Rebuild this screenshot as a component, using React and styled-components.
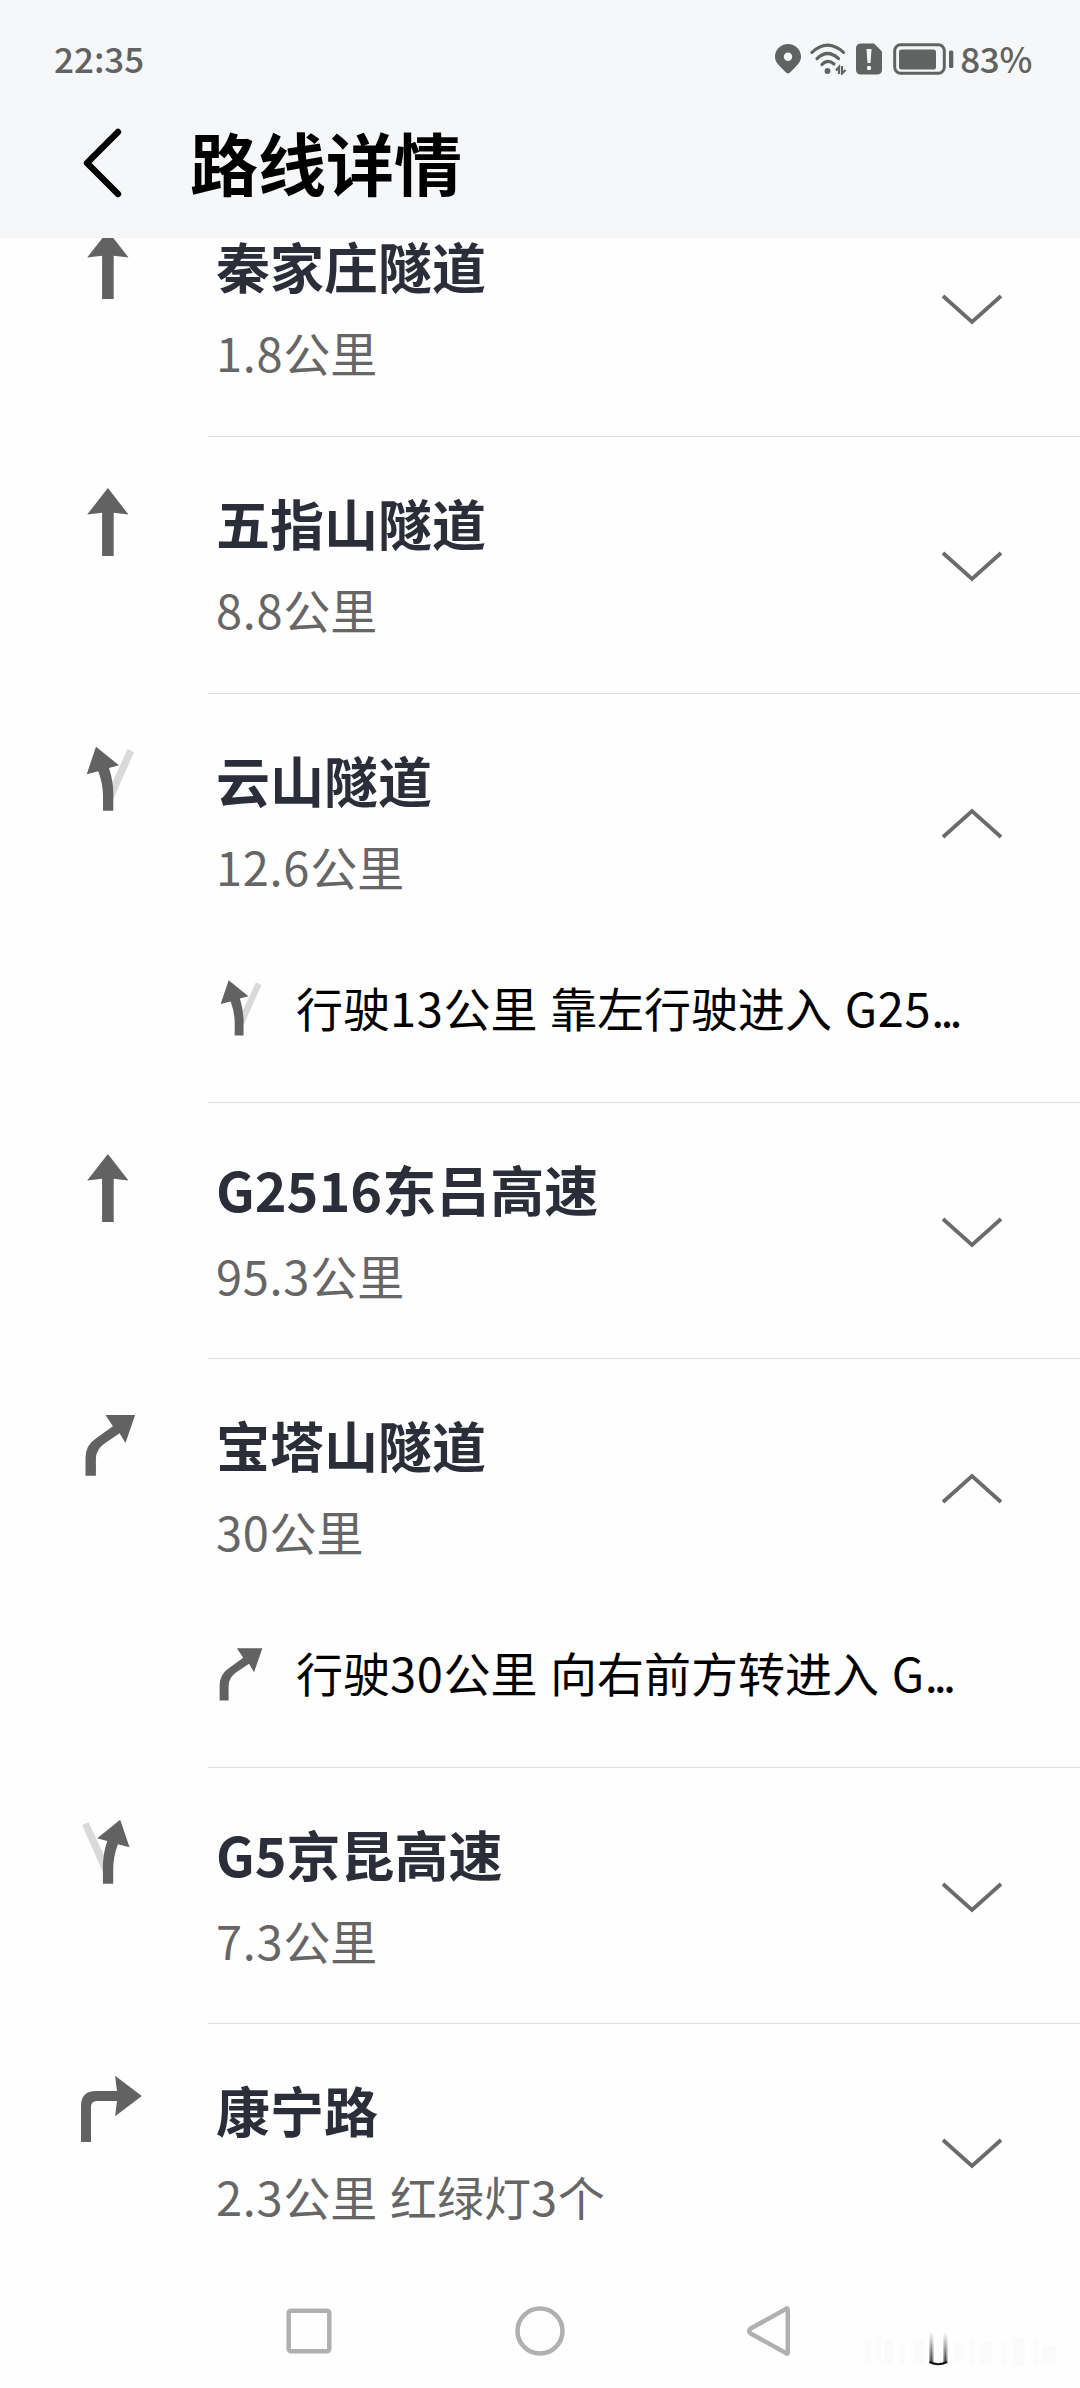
import React from 'react';
import styled, { createGlobalStyle } from 'styled-components';

const GlobalStyle = createGlobalStyle`
  * {
    box-sizing: border-box;
  }

  body {
    margin: 0;
    background: #fefefe;
    font-family: 'Noto Sans CJK SC', sans-serif;
  }

  svg {
    display: block;
    flex-shrink: 0;
  }
`;

const steps = [
  { icon: 'straight', name: '秦家庄隧道', info: '1.8公里', height: 257 },
  { icon: 'straight', name: '五指山隧道', info: '8.8公里', height: 257 },
  {
    icon: 'keepLeft',
    name: '云山隧道',
    info: '12.6公里',
    height: 409,
    detail: '行驶13公里 靠左行驶进入 G25',
  },
  { icon: 'straight', name: 'G2516东吕高速', info: '95.3公里', height: 256 },
  {
    icon: 'slightRight',
    name: '宝塔山隧道',
    info: '30公里',
    height: 409,
    detail: '行驶30公里 向右前方转进入 G',
  },
  { icon: 'keepRight', name: 'G5京昆高速', info: '7.3公里', height: 256 },
  { icon: 'right', name: '康宁路', info: '2.3公里 红绿灯3个', height: 257 },
];

const fork = (
  <>
    <path d="M55.7 5L62 8.3L41.3 55L39 41Z" fill="#d9d9d9" />
    <path d="M24 2.7L47 21.3L37 23.9Q41.3 37 41.3 50V66.7H31V52Q31 40 26.3 27.3L14.7 30.3Z" />
  </>
);

const turns = {
  straight: <path d="M35.9 1L56.5 27.5L41.7 25.8V69H30.1V25.8L15.2 27.5Z" />,
  keepLeft: fork,
  keepRight: <g transform="translate(72.2 -1) scale(-1 1)">{fork}</g>,
  slightRight: (
    <path d="M63.1 6L53.5 34L47.6 24.2L32.5 34.4Q23.9 40.5 23.9 50V66.7H13.5V49Q13.5 36 24.5 29L40.9 17.2L33.5 6Z" />
  ),
  right: (
    <path d="M69.8 22L43.1 42.3L45 27H25Q19 27 19 33V68H9V32Q9 17 24 17H45L43.1 1.7Z" />
  ),
};

function Turn({ type, size }) {
  return (
    <svg width={size} height={size} viewBox="0 0 72 72" fill="#626262">
      {turns[type]}
    </svg>
  );
}

function Chevron({ up }) {
  return (
    <svg width="64" height="34" viewBox="0 0 64 34" fill="none" stroke="#6b6b6b" strokeWidth="3.8">
      <path d={up ? 'M3 32L32 6L61 32' : 'M3 5L32 31L61 5'} />
    </svg>
  );
}

// digits and latin letters are set slightly wider than the font's own advance
function MixedText({ children }) {
  return children
    .split(/([A-Z0-9.]+)/)
    .map((part, i) => (i % 2 ? <Latin key={i}>{part}</Latin> : part));
}

function Step({ icon, name, info, detail, height }) {
  return (
    <Row $height={height}>
      <RowIcon>
        <Turn type={icon} size={72} />
      </RowIcon>
      <RowBody>
        <Summary>
          <div>
            <Name>{name}</Name>
            <Info><MixedText>{info}</MixedText></Info>
          </div>
          <Chevron up={Boolean(detail)} />
        </Summary>
        {detail && (
          <Detail>
            <Turn type={icon} size={62} />
            <DetailText>
              <MixedText>{detail}</MixedText>
              <Dots>...</Dots>
            </DetailText>
          </Detail>
        )}
      </RowBody>
    </Row>
  );
}

function StatusIcons() {
  return (
    <Icons>
      <svg width="26" height="32" viewBox="0 0 26 32" fill="#616362">
        <path
          fillRule="evenodd"
          d="M13 1C20.2 1 26 6.6 26 13.6C26 18 23.7 20.8 20 24.5L15 29.6Q13 31.6 11 29.6L6 24.5C2.3 20.8 0 18 0 13.6C0 6.6 5.8 1 13 1ZM13 9.6A4.2 4.2 0 1 0 13 18A4.2 4.2 0 1 0 13 9.6Z"
        />
      </svg>
      <svg width="37" height="32" viewBox="0 0 37 32" fill="none" stroke="#616362" strokeWidth="3.2" strokeLinecap="round">
        <path d="M2 9.4Q17.5 -5 33.5 9.4" />
        <path d="M7 15.6Q17.5 5.5 28.5 15.6" />
        <path d="M12 21.5Q17.5 15.5 24 21" />
        <circle cx="17.5" cy="28" r="2.9" fill="#616362" stroke="none" />
        <path d="M26 27.5L29 24V31M32 23V30.5L35.5 27" strokeWidth="2.2" strokeLinecap="butt" />
      </svg>
      <svg width="26" height="32" viewBox="0 0 26 32" fill="#616362">
        <path d="M5 .5H18L26 8.5V26.5Q26 31.5 21 31.5H5Q0 31.5 0 26.5V5.5Q0 .5 5 .5Z" />
        <path d="M10.5 6H15.5L14.5 20H11.5Z" fill="#f5f7f9" />
        <circle cx="13" cy="25" r="2.2" fill="#f5f7f9" />
      </svg>
      <Battery width="61" height="32" viewBox="0 0 61 32" fill="#616362">
        <rect x="1.7" y="1.7" width="49.6" height="28.6" rx="6" fill="none" stroke="#616362" strokeWidth="3" />
        <rect x="6" y="6.5" width="37" height="20" rx="2.5" />
        <rect x="56" y="7.5" width="4.3" height="17.5" rx="1.5" />
      </Battery>
    </Icons>
  );
}

function App() {
  return (
    <Screen>
      <GlobalStyle />
      <Header>
        <StatusBar>
          <span>22:35</span>
          <StatusRight>
            <StatusIcons />
            <Percent>83%</Percent>
          </StatusRight>
        </StatusBar>
        <TitleBar>
          <svg width="40" height="70" viewBox="0 0 40 70" fill="none" stroke="#000" strokeWidth="6.4" strokeLinecap="round" strokeLinejoin="round">
            <path d="M36 4L5 35L36 66" />
          </svg>
          <Title>路线详情</Title>
        </TitleBar>
      </Header>
      <List>
        {steps.map((step) => (
          <Step key={step.name} {...step} />
        ))}
      </List>
      <NavBar>
        <svg width="50" height="50" viewBox="0 0 50 50">
          <rect x="4.7" y="4.7" width="40.6" height="40.6" rx="2.5" />
        </svg>
        <svg width="50" height="50" viewBox="0 0 50 50">
          <circle cx="25" cy="25" r="22.5" />
        </svg>
        <svg width="50" height="50" viewBox="0 0 50 50">
          <path d="M41.8 4Q41.8 1 39.5 3.300L4.500 22.500Q2 25 4.500 27.500L39.500 46.700Q41.800 49 41.800 46Z" />
        </svg>
      </NavBar>
      <Watermark width="200" height="40" viewBox="0 0 200 40">
        <defs>
          <linearGradient id="fade" x1="0" y1="0" x2="0" y2="1">
            <stop offset="0" stopColor="#000" stopOpacity="0" />
            <stop offset="1" stopColor="#000" stopOpacity="0.85" />
          </linearGradient>
          <linearGradient id="edges">
            <stop offset="0" stopColor="#fff" stopOpacity="0.7" />
            <stop offset="0.5" stopColor="#fff" stopOpacity="0" />
            <stop offset="1" stopColor="#fff" stopOpacity="0.7" />
          </linearGradient>
        </defs>
        <g fill="#fbfbfb">
          <path d="M4 8h7v28h-7zM16 6h5v26h-5zM24 10h9v24h-9zM40 14h5v20h-5zM54 10h10v24h-10z" />
          <path d="M94 12h10v20h-10zM110 8h5v28h-5zM120 12h12v23h-12zM142 12h5v24h-5zM153 8h12v28h-12zM174 10h5v26h-5zM182 16h14v18h-14z" />
        </g>
        <path d="M69 2h4.5v31h-4.5zM83 2h4.5v31h-4.5z" fill="url(#fade)" />
        <path d="M69 2h4.5v31h-4.5z" fill="url(#edges)" />
        <path d="M83 2h4.5v31h-4.5z" fill="url(#edges)" />
        <path d="M69.5 32Q78.2 36.5 87 32" fill="none" stroke="#111" strokeWidth="2.2" />
      </Watermark>
    </Screen>
  );
}

const Screen = styled.div`
  position: relative;
  display: flex;
  flex-direction: column;
  width: 1080px;
  height: 2388px;
  overflow: hidden;
  background: #fefefe;
`;

const Header = styled.header`
  position: relative;
  z-index: 1;
  flex-shrink: 0;
  height: 238px;
  background: #f5f7f9;
`;

const StatusBar = styled.div`
  display: flex;
  justify-content: space-between;
  height: 118px;
  padding: 0 48px 0 54px;
  color: #616362;
  font-size: 35px;
  font-weight: 500;
  line-height: 115px;
`;

const StatusRight = styled.div`
  display: flex;
  align-items: flex-start;
`;

const Icons = styled.div`
  display: flex;
  gap: 9px;
  padding-top: 43px;
  margin-right: 6px;
`;

const Battery = styled.svg`
  margin-left: 2px;
`;

const Percent = styled.span`
  letter-spacing: -0.3px;
`;

const TitleBar = styled.div`
  display: flex;
  align-items: center;
  height: 90px;
  padding-left: 82px;
`;

const Title = styled.h1`
  margin: -2px 0 0 68px;
  color: #000;
  font-size: 68px;
  font-weight: 700;
  line-height: 84px;
`;

const List = styled.main`
  flex: 1;
  min-height: 0;
  margin-top: -58px;
  overflow: hidden;
`;

const Row = styled.section`
  display: flex;
  height: ${(props) => props.$height}px;
`;

const RowIcon = styled.div`
  width: 208px;
  padding: 50px 0 0 72px;
`;

const RowBody = styled.div`
  flex: 1;
  border-bottom: 1px solid #dedede;

  ${Row}:last-child & {
    border-bottom: none;
  }
`;

const Summary = styled.div`
  display: flex;
  align-items: center;
  justify-content: space-between;
  height: 256px;
  padding: 0 76px 0 8px;
`;

const Name = styled.div`
  margin-top: -4px;
  color: #2b2e38;
  font-size: 54px;
  font-weight: 700;
  line-height: 70px;
`;

const Info = styled.div`
  margin-top: 21px;
  color: #666;
  font-size: 47px;
  line-height: 60px;
  word-spacing: 2px;
`;

const Latin = styled.span`
  letter-spacing: 0.015em;
`;

const Detail = styled.div`
  display: flex;
  padding-top: 28px;
`;

const DetailText = styled.div`
  margin-left: 26px;
  color: #000;
  font-size: 47px;
  line-height: 58px;
  white-space: nowrap;
  word-spacing: 2px;
`;

const Dots = styled.span`
  letter-spacing: -4px;
`;

const NavBar = styled.nav`
  display: flex;
  flex-shrink: 0;
  align-items: center;
  justify-content: center;
  gap: 181px;
  height: 114px;

  svg {
    fill: none;
    stroke: #b0b0b0;
    stroke-width: 4.5px;
  }
`;

const Watermark = styled.svg`
  position: absolute;
  right: 20px;
  bottom: 18px;
`;

export default App;
